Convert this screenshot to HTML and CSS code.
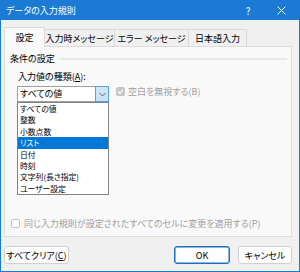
FILE: index.html
```html
<!DOCTYPE html>
<html lang="ja">
<head>
<meta charset="utf-8">
<link rel="stylesheet" href="styles.css">
</head>
<body>
<div class="dialog">
  <div class="titlebar">
    <span class="title">データの入力規則</span>
    <span class="help">?</span>
    <span class="close"><svg width="9" height="9" viewBox="0 0 9 9"><path d="M0.5 0.5L8.5 8.5M8.5 0.5L0.5 8.5" stroke="#fff" stroke-width="1" fill="none"/></svg></span>
  </div>
  <div class="tabs">
    <div class="tab active t1">設定</div>
    <div class="tab t2">入力時メッセージ</div>
    <div class="tab t3">エラー メッセージ</div>
    <div class="tab t4">日本語入力</div>
  </div>
  <div class="panel">
    <div class="group-head"><span>条件の設定</span><span class="rule"></span></div>
    <div class="field-label">入力値の種類(<u>A</u>):</div>
    <div class="row">
      <div class="combo-wrap">
        <div class="combo">
          <span class="combo-text">すべての値</span>
          <span class="drop"><svg width="7" height="5" viewBox="0 0 7 5"><path d="M0.5 1L3.5 4L6.5 1" stroke="#606060" stroke-width="1" fill="none"/></svg></span>
        </div>
        <ul class="listbox">
          <li>すべての値</li>
          <li>整数</li>
          <li>小数点数</li>
          <li class="sel">リスト</li>
          <li>日付</li>
          <li>時刻</li>
          <li>文字列(長さ指定)</li>
          <li>ユーザー設定</li>
        </ul>
      </div>
      <div class="check disabled ignore">
        <span class="box checked"><svg width="7" height="7" viewBox="0 0 7 7"><path d="M1 3.5L3 5.5L6 1.5" stroke="#fff" stroke-width="1.2" fill="none"/></svg></span>
        <span>空白を無視する(B)</span>
      </div>
    </div>
    <div class="check disabled apply">
      <span class="box"></span>
      <span>同じ入力規則が設定されたすべてのセルに変更を適用する(P)</span>
    </div>
  </div>
  <div class="footer">
    <button class="btn clear">すべてクリア(<u>C</u>)</button>
    <span class="grow"></span>
    <button class="btn ok">OK</button>
    <button class="btn cancel">キャンセル</button>
  </div>
</div>
</body>
</html>
```

FILE: styles.css
```css
body {
  margin: 0;
}

.dialog {
  width: 300px;
  height: 272px;
  box-sizing: border-box;
  background: #f0f0f0;
  box-shadow: inset -1px -1px 0 #1a7ad4, inset 1px 0 0 #1a7ad4;
  display: flex;
  flex-direction: column;
  font-family: "Noto Sans CJK JP", "Noto Sans", sans-serif;
  font-size: 9px;
  font-feature-settings: "palt";
  color: #000;
}

.titlebar {
  height: 20px;
  background: #1a7ad4;
  color: #fff;
  display: flex;
  align-items: center;
  padding-left: 6px;
}

.title {
  flex: 1;
}

.help {
  width: 10px;
  text-align: center;
  margin-right: 23px;
  font-size: 10px;
}

.close {
  width: 10px;
  display: flex;
  justify-content: center;
  margin-right: 14px;
}

.tabs {
  display: flex;
  align-items: flex-end;
  height: 20px;
  margin: 7px 0 0 4px;
  position: relative;
  z-index: 1;
}

.tab {
  box-sizing: border-box;
  height: 17px;
  margin-bottom: 1px;
  border: 1px solid #d9d9d9;
  border-bottom: 0;
  background: #f0f0f0;
  display: flex;
  align-items: center;
  justify-content: center;
  margin-left: -1px;
  white-space: nowrap;
}

.tab.active {
  height: 20px;
  margin-bottom: 0;
  background: #f9f9f9;
  border-color: #dadada;
  position: relative;
  z-index: 2;
}

.t1 { width: 41px; margin-left: 0; }
.t2 { width: 71px; }
.t3 { width: 75px; }
.t4 { width: 59px; }

.panel {
  margin: -1px 8px 0 4px;
  height: 191px;
  box-sizing: border-box;
  border: 1px solid #dcdcdc;
  background: #f9f9f9;
  display: flex;
  flex-direction: column;
}

.group-head {
  margin-top: 6px;
  height: 11px;
  line-height: 11px;
  display: flex;
  align-items: center;
  padding-left: 5px;
}

.rule {
  flex: 1;
  height: 2px;
  background: #e8e8e8;
  margin-left: 5px;
  margin-right: 4px;
}

.field-label {
  margin-top: 7px;
  padding-left: 13px;
  line-height: 11px;
}

.row {
  margin-top: 4px;
  display: flex;
  align-items: flex-start;
  padding-left: 12px;
}

.combo-wrap {
  position: relative;
  width: 92px;
}

.combo {
  height: 16px;
  box-sizing: border-box;
  border: 1px solid #a0a0a0;
  background: #fff;
  display: flex;
  align-items: center;
}

.combo-text {
  flex: 1;
  padding-left: 2px;
  line-height: 14px;
}

.drop {
  width: 14px;
  height: 16px;
  margin: -1px -1px -1px 0;
  box-sizing: border-box;
  border: 1px solid #5a9fe0;
  background: #cce4f7;
  display: flex;
  align-items: center;
  justify-content: center;
}

.listbox {
  position: absolute;
  top: 16px;
  left: 0;
  width: 92px;
  box-sizing: border-box;
  border: 1px solid #828282;
  background: #fff;
  margin: 0;
  padding: 0;
  list-style: none;
  z-index: 3;
}

.listbox li {
  height: 11.4px;
  line-height: 11.4px;
  font-size: 7.8px;
  padding-left: 2px;
  white-space: nowrap;
}

.listbox li.sel {
  background: #0078d7;
  color: #fff;
}

.check {
  display: flex;
  align-items: center;
  line-height: 11px;
  white-space: nowrap;
}

.check.disabled {
  color: #a0a0a0;
}

.ignore {
  margin-left: 7px;
  margin-top: 0;
}

.box {
  width: 9px;
  height: 9px;
  box-sizing: border-box;
  border: 1px solid #c4c4c4;
  border-radius: 2px;
  background: #fff;
  margin-right: 3px;
  display: flex;
  align-items: center;
  justify-content: center;
}

.box.checked {
  background: #c6c6c6;
  border-color: #c6c6c6;
}

.apply {
  margin-top: auto;
  margin-bottom: 7px;
  padding-left: 6px;
}

.apply .box {
  margin-right: 4px;
}

.footer {
  display: flex;
  margin: 9px 8px 0 4px;
  gap: 8px;
}

.grow {
  flex: 1;
}

.btn {
  height: 18px;
  box-sizing: border-box;
  border: 1px solid #d0d0d0;
  border-radius: 3px;
  background: #fdfdfd;
  font: inherit;
  color: #000;
  padding: 0;
  display: flex;
  align-items: center;
  justify-content: center;
}

.clear { width: 65px; }
.ok { width: 56px; border-color: #1a6fc4; box-shadow: inset 0 0 0 0.5px #1a6fc4; }
.cancel { width: 54px; }
```
